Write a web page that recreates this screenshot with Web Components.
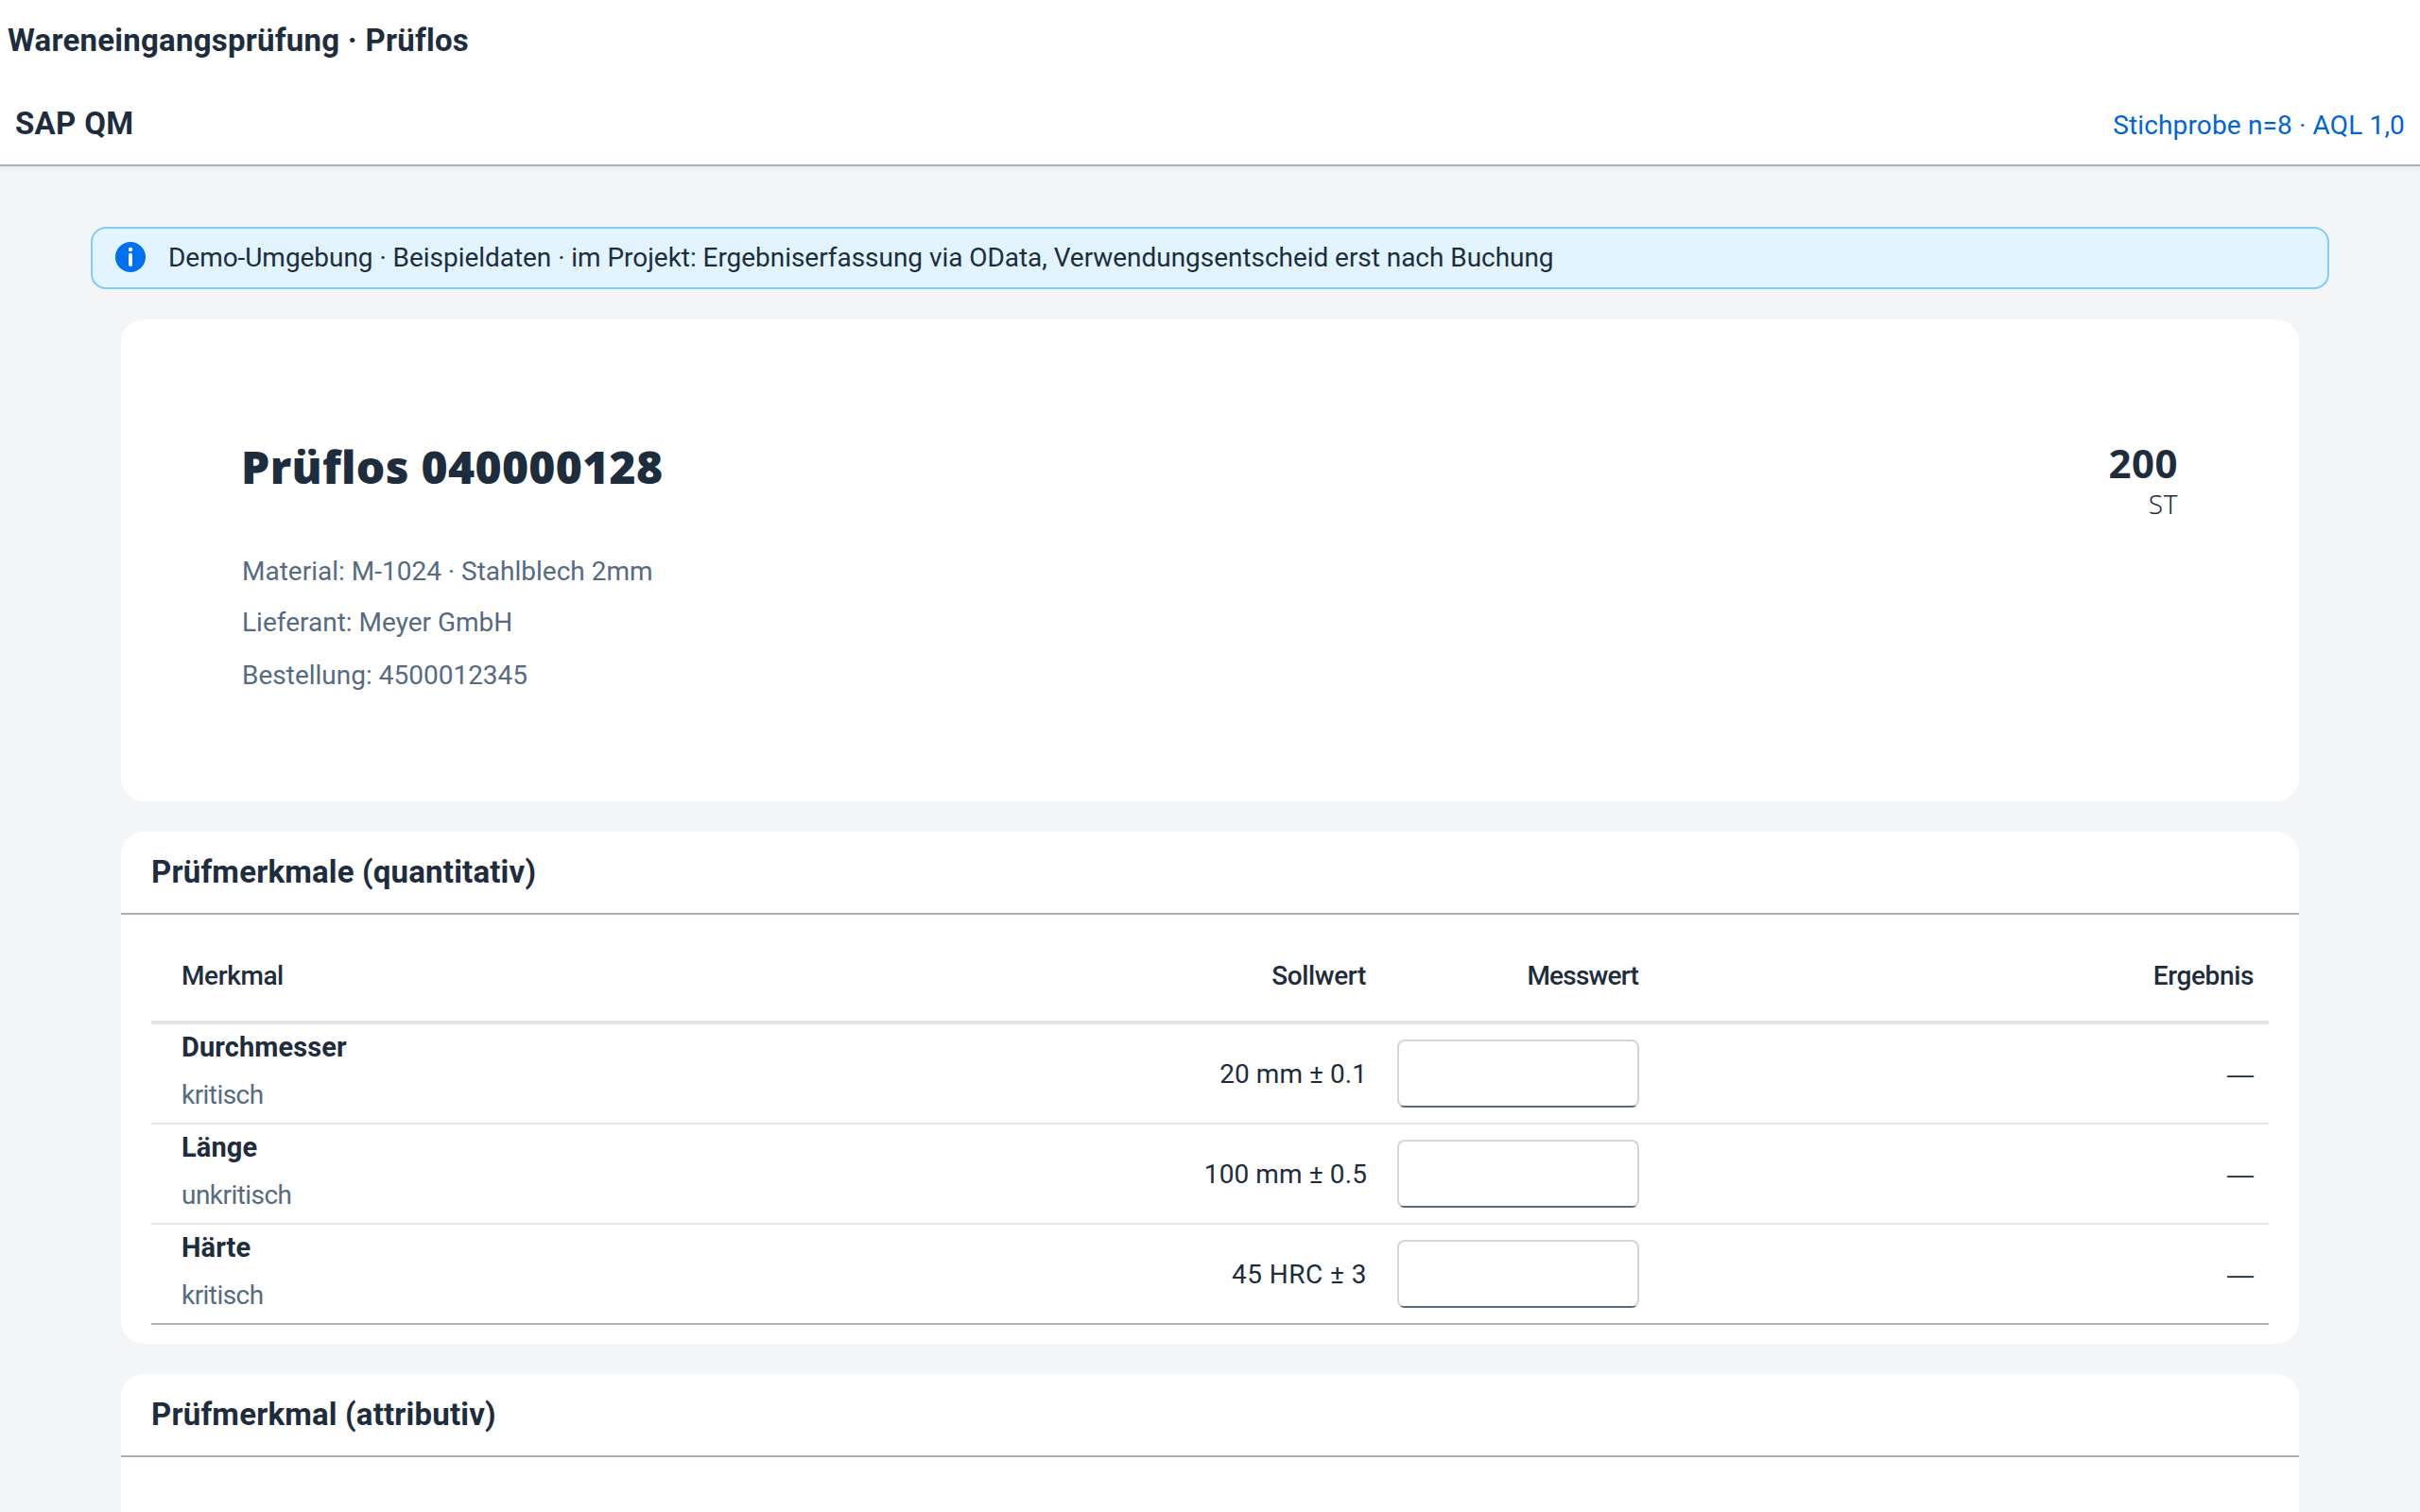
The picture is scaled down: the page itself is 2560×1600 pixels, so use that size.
<!DOCTYPE html>
<html lang="de">
    <head>
        <meta charset="UTF-8" />
        <meta name="viewport" content="width=device-width, initial-scale=1.0" />
        <title>Wareneingangsprüfung · Prüflos</title>
        <style>
            :root {
                --text: #1d2d3e;
                --label: #556b82;
                --link: #0064d9;
                --line: #a8b2bd;
                --base: #ffffff;
                --alt-font: "Noto Sans", sans-serif;
            }

            html,
            body {
                margin: 0;
                height: 1600px;
                overflow: hidden;
            }

            body {
                background: #f4f5f7;
                color: var(--text);
                font: 28px Roboto, sans-serif;
            }
        </style>
    </head>
    <body>
        <template id="page-title">
            <style>
                :host {
                    display: block;
                    height: 88px;
                    padding: 0 8px;
                    background: var(--base);
                }

                h1 {
                    margin: 0;
                    font-size: 33px;
                    font-weight: 700;
                    line-height: 86px;
                    letter-spacing: 0.23px;
                }
            </style>
            <h1><slot></slot></h1>
        </template>

        <template id="shell-bar">
            <style>
                :host {
                    display: flex;
                    justify-content: space-between;
                    align-items: baseline;
                    height: 86px;
                    padding: 0 16px;
                    background: var(--base);
                    border-bottom: 2px solid var(--line);
                    box-shadow: 0 4px 4px rgba(34, 53, 72, 0.03);
                    line-height: 86px;
                }

                .title {
                    font-size: 33px;
                    font-weight: 700;
                    letter-spacing: 0.3px;
                }

                .info {
                    color: var(--link);
                    letter-spacing: 0.15px;
                }
            </style>
            <span class="title"><slot></slot></span>
            <span class="info"><slot name="info"></slot></span>
        </template>

        <template id="message-strip">
            <style>
                :host {
                    display: flex;
                    align-items: center;
                    gap: 24px;
                    height: 62px;
                    margin: 64px 96px 32px;
                    padding: 0 24px;
                    background: #e1f4ff;
                    border: 2px solid #82caf9;
                    border-radius: 16px;
                    line-height: 62px;
                    letter-spacing: -0.045px;
                }

                svg {
                    width: 32px;
                    height: 32px;
                    margin-bottom: 2px;
                }
            </style>
            <svg viewBox="0 0 32 32">
                <circle cx="16" cy="16" r="16" fill="#0070f2" />
                <circle cx="16" cy="8" r="2.2" fill="#fff" />
                <rect x="14" y="11.8" width="4" height="14.2" rx="2" fill="#fff" />
            </svg>
            <span><slot></slot></span>
        </template>

        <template id="object-header">
            <style>
                :host {
                    display: flex;
                    justify-content: space-between;
                    align-items: flex-start;
                    box-sizing: border-box;
                    height: 510px;
                    margin: 0 128px 32px;
                    padding: 128px;
                    background: var(--base);
                    border-radius: 24px;
                }

                h2 {
                    margin: 0 0 56px -1px;
                    font: 900 48px/56px var(--alt-font);
                    letter-spacing: 0.3px;
                }

                .attributes {
                    display: flex;
                    flex-direction: column;
                    color: var(--label);
                    line-height: 54px;
                }

                ::slotted(p) {
                    margin: 0;
                }

                .status {
                    display: flex;
                    flex-direction: column;
                    align-items: flex-end;
                    font-family: var(--alt-font);
                }

                .number {
                    font-size: 42px;
                    font-weight: 700;
                    line-height: 48px;
                    letter-spacing: 0.5px;
                }

                .unit {
                    font-weight: 300;
                    line-height: 38px;
                    letter-spacing: 0.5px;
                }
            </style>
            <div>
                <h2><slot name="title"></slot></h2>
                <div class="attributes"><slot></slot></div>
            </div>
            <div class="status">
                <span class="number"><slot name="number"></slot></span>
                <span class="unit"><slot name="unit"></slot></span>
            </div>
        </template>

        <template id="content-panel">
            <style>
                :host {
                    display: block;
                    margin: 0 128px 32px;
                    background: var(--base);
                    border-radius: 24px;
                }

                h3 {
                    margin: 0;
                    padding: 0 32px;
                    border-bottom: 2px solid var(--line);
                    font-size: 33px;
                    font-weight: 700;
                    line-height: 86px;
                    letter-spacing: 0.18px;
                }

                .body {
                    min-height: 60px;
                    padding: 18px 32px 20px;
                }
            </style>
            <h3><slot name="title"></slot></h3>
            <div class="body"><slot></slot></div>
        </template>

        <template id="result-table">
            <style>
                :host {
                    display: block;
                    border-bottom: 2px solid #b0b2ba;
                }

                .head {
                    display: grid;
                    grid-template-columns: 1fr 300px 288px 650px;
                    border-bottom: 4px solid #e4e4e4;
                    font-weight: 500;
                    line-height: 94px;
                    text-align: right;
                }

                .head span {
                    padding: 0 17px 0 16px;
                    letter-spacing: -0.37px;
                }

                .head .first {
                    padding-left: 32px;
                    letter-spacing: -0.4px;
                    text-align: left;
                }

                .head .value {
                    letter-spacing: -0.8px;
                }

                .head .last {
                    padding-right: 16px;
                }
            </style>
            <div class="head">
                <span class="first">Merkmal</span>
                <span>Sollwert</span>
                <span class="value">Messwert</span>
                <span class="last">Ergebnis</span>
            </div>
            <slot></slot>
        </template>

        <template id="result-row">
            <style>
                :host {
                    display: grid;
                    grid-template-columns: 1fr 300px 288px 650px;
                    height: 104px;
                    border-bottom: 2px solid #e6e6e6;
                }

                :host(:last-of-type) {
                    border-bottom: 0;
                }

                .name {
                    display: flex;
                    flex-direction: column;
                    padding-left: 32px;
                    line-height: 50px;
                }

                .name b {
                    padding-bottom: 2px;
                    font-size: 29px;
                    line-height: 48px;
                    letter-spacing: 0.1px;
                }

                .name span {
                    color: var(--label);
                    letter-spacing: -0.55px;
                }

                .target,
                .result {
                    padding: 2px 16px 0;
                    line-height: 102px;
                    text-align: right;
                }

                .target {
                    white-space: nowrap;
                }

                .result {
                    font-family: "Liberation Sans", sans-serif;
                }

                .entry {
                    display: flex;
                    align-items: center;
                    padding: 0 16px;
                }

                /* grey outline with a darker line along the bottom edge */
                input {
                    box-sizing: border-box;
                    width: 256px;
                    height: 72px;
                    margin: 0;
                    border: 2px solid transparent;
                    border-radius: 8px;
                    background:
                        linear-gradient(#556b82, #556b82) bottom / 100% 2px no-repeat border-box,
                        linear-gradient(#fff, #fff) padding-box,
                        linear-gradient(#d3d5d7, #d3d5d7) border-box;
                    font: inherit;
                }
            </style>
            <div class="name">
                <b></b>
                <span><slot></slot></span>
            </div>
            <div class="target"></div>
            <div class="entry"><input type="text" /></div>
            <div class="result">—</div>
        </template>

        <page-title>Wareneingangsprüfung · Prüflos</page-title>
        <shell-bar>
            SAP QM
            <span slot="info">Stichprobe n=8 · AQL 1,0</span>
        </shell-bar>
        <main>
            <message-strip>Demo-Umgebung · Beispieldaten · im Projekt: Ergebniserfassung via OData, Verwendungsentscheid erst nach Buchung</message-strip>
            <object-header>
                <span slot="title">Prüflos 040000128</span>
                <p>Material: M-1024 · Stahlblech 2mm</p>
                <p>Lieferant: Meyer GmbH</p>
                <p style="line-height: 58px">Bestellung: 4500012345</p>
                <span slot="number">200</span>
                <span slot="unit">ST</span>
            </object-header>
            <content-panel>
                <span slot="title">Prüfmerkmale (quantitativ)</span>
                <result-table>
                    <result-row name="Durchmesser" target="20 mm ± 0.1" spacing="0.05px">kritisch</result-row>
                    <result-row name="Länge" target="100 mm ± 0.5" spacing="0.1px">unkritisch</result-row>
                    <result-row name="Härte" target="45 HRC ± 3" spacing="0.45px">kritisch</result-row>
                </result-table>
            </content-panel>
            <content-panel>
                <span slot="title">Prüfmerkmal (attributiv)</span>
            </content-panel>
        </main>

        <script>
            class TemplateElement extends HTMLElement {
                constructor() {
                    super();
                    const template = document.getElementById(this.localName);
                    const shadow = this.attachShadow({ mode: "open" });
                    shadow.appendChild(template.content.cloneNode(true));
                }
            }

            class ResultRow extends TemplateElement {
                connectedCallback() {
                    const target = this.shadowRoot.querySelector(".target");
                    target.textContent = this.getAttribute("target");
                    target.style.letterSpacing = this.getAttribute("spacing") || "normal";
                    this.shadowRoot.querySelector("b").textContent = this.getAttribute("name");
                    this.shadowRoot.querySelector("input").setAttribute("aria-label", this.getAttribute("name"));
                }
            }

            customElements.define("page-title", class extends TemplateElement {});
            customElements.define("shell-bar", class extends TemplateElement {});
            customElements.define("message-strip", class extends TemplateElement {});
            customElements.define("object-header", class extends TemplateElement {});
            customElements.define("content-panel", class extends TemplateElement {});
            customElements.define("result-table", class extends TemplateElement {});
            customElements.define("result-row", ResultRow);
        </script>
    </body>
</html>
